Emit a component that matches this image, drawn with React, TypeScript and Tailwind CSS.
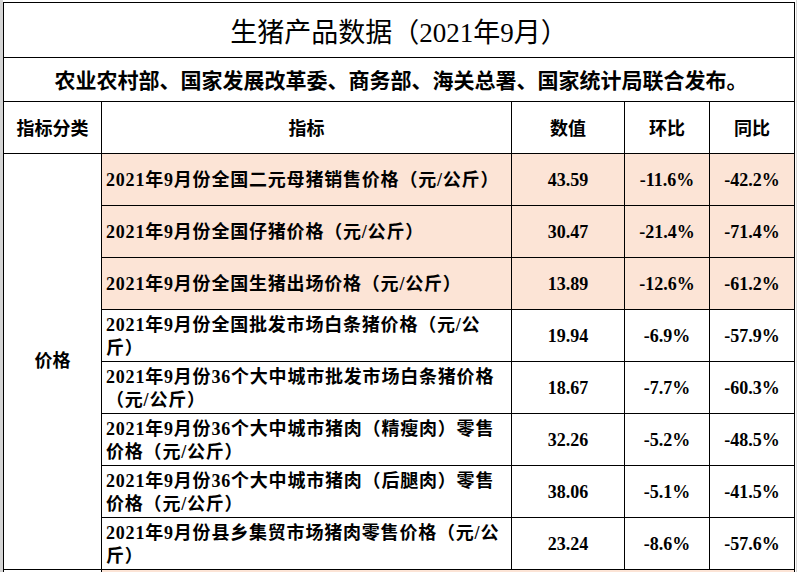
import React from "react";

// 行数据
interface Row {
  name: React.ReactNode;
  value: string;
  mom: string;
  yoy: string;
  highlight?: boolean;
}

const rows: Row[] = [
  { name: "2021年9月份全国二元母猪销售价格（元/公斤）", value: "43.59", mom: "-11.6%", yoy: "-42.2%", highlight: true },
  { name: "2021年9月份全国仔猪价格（元/公斤）", value: "30.47", mom: "-21.4%", yoy: "-71.4%", highlight: true },
  { name: "2021年9月份全国生猪出场价格（元/公斤）", value: "13.89", mom: "-12.6%", yoy: "-61.2%", highlight: true },
  { name: <>2021年9月份全国批发市场白条猪价格（元/公<br />斤）</>, value: "19.94", mom: "-6.9%", yoy: "-57.9%" },
  { name: <>2021年9月份36个大中城市批发市场白条猪价格<br />（元/公斤）</>, value: "18.67", mom: "-7.7%", yoy: "-60.3%" },
  { name: <>2021年9月份36个大中城市猪肉（精瘦肉）零售<br />价格（元/公斤）</>, value: "32.26", mom: "-5.2%", yoy: "-48.5%" },
  { name: <>2021年9月份36个大中城市猪肉（后腿肉）零售<br />价格（元/公斤）</>, value: "38.06", mom: "-5.1%", yoy: "-41.5%" },
  { name: <>2021年9月份县乡集贸市场猪肉零售价格（元/公<br />斤）</>, value: "23.24", mom: "-8.6%", yoy: "-57.6%" },
];

const serif = "font-['Liberation_Serif','Noto_Sans_CJK_SC',serif]";
const sans = "font-['Noto_Sans_CJK_SC','Liberation_Sans',sans-serif]";

export default function App() {
  return (
    <div className="h-[572px] w-[797px] overflow-hidden bg-white flex pt-[2px]">
      {/* 左侧网格线 */}
      <div className="w-[3px] -mt-[2px] bg-[#d4d4d4] shrink-0" />

      <div className="w-[792px] shrink-0">
        <div className="grid grid-cols-[98px_410px_113px_85px_85px] border-t border-l border-black text-black">
          {/* 标题 */}
          <div className={`col-span-5 h-[55px] border-r border-b border-black flex items-center justify-center pt-[6px] text-[27px] ${serif}`}>
            生猪产品数据（2021年9月）
          </div>
          {/* 副标题 */}
          <div className={`col-span-5 h-[44px] border-r border-b border-black flex items-center justify-center pl-[4px] text-[21px] font-bold ${sans}`}>
            农业农村部、国家发展改革委、商务部、海关总署、国家统计局联合发布。
          </div>

          {/* 表头 */}
          {["指标分类", "指标", "数值", "环比", "同比"].map((h) => (
            <div
              key={h}
              className={`h-[52px] border-r border-b border-black flex items-center justify-center text-[18px] font-bold ${sans}`}
            >
              {h}
            </div>
          ))}

          {/* 分类列 */}
          <div className={`row-span-8 border-r border-b border-black flex items-center justify-center text-[18px] font-bold ${serif}`}>
            价格
          </div>

          {rows.map((r, i) => {
            const bg = r.highlight ? "bg-[#fce4d6]" : "bg-white";
            const cell = `h-[52px] border-r border-b border-black flex items-center text-[18px] font-bold leading-[23px] ${serif} ${bg}`;
            return (
              <React.Fragment key={i}>
                <div className={`${cell} pl-1 pt-[2px] whitespace-nowrap tracking-[0.8px]`}>
                  <span>{r.name}</span>
                </div>
                <div className={`${cell} justify-center pt-[2px]`}>{r.value}</div>
                <div className={`${cell} justify-center pt-[2px]`}>{r.mom}</div>
                <div className={`${cell} justify-center pt-[2px]`}>{r.yoy}</div>
              </React.Fragment>
            );
          })}

          {/* 下一行（被截断） */}
          <div className="h-[30px] border-r border-black" />
          <div className="col-span-4 h-[30px] border-r border-black bg-[#fce4d6]" />
        </div>
      </div>

      {/* 右侧网格线 */}
      <div className="w-px bg-white shrink-0" />
      <div className="w-px -mt-[2px] bg-[#d4d4d4] shrink-0" />
    </div>
  );
}
